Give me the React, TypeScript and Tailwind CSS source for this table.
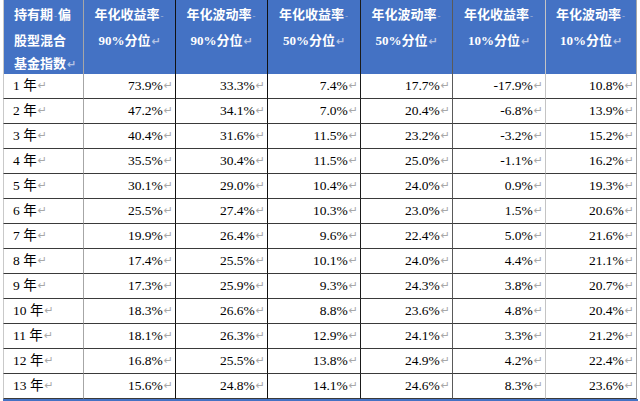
const cols = [
  { w: 'w-[80px]', line: 'border-l-[#c9c9c9]' },
  { w: 'w-[92px]', line: 'border-l-[#a6a6a6]' },
  { w: 'w-[92px]', line: 'border-l-[#111111]' },
  { w: 'w-[93px]', line: 'border-l-[#111111]' },
  { w: 'w-[92px]', line: 'border-l-[#1a1a1a]' },
  { w: 'w-[93px]', line: 'border-l-[#5a5a5a]' },
  { w: 'w-[92px]', line: 'border-l-[#c4c4c4]' },
]

const headers = [
  ['年化收益率', '90%分位'],
  ['年化波动率', '90%分位'],
  ['年化收益率', '50%分位'],
  ['年化波动率', '50%分位'],
  ['年化收益率', '10%分位'],
  ['年化波动率', '10%分位'],
]

const rows = [
  ['1 年', '73.9%', '33.3%', '7.4%', '17.7%', '-17.9%', '10.8%'],
  ['2 年', '47.2%', '34.1%', '7.0%', '20.4%', '-6.8%', '13.9%'],
  ['3 年', '40.4%', '31.6%', '11.5%', '23.2%', '-3.2%', '15.2%'],
  ['4 年', '35.5%', '30.4%', '11.5%', '25.0%', '-1.1%', '16.2%'],
  ['5 年', '30.1%', '29.0%', '10.4%', '24.0%', '0.9%', '19.3%'],
  ['6 年', '25.5%', '27.4%', '10.3%', '23.0%', '1.5%', '20.6%'],
  ['7 年', '19.9%', '26.4%', '9.6%', '22.4%', '5.0%', '21.6%'],
  ['8 年', '17.4%', '25.5%', '10.1%', '24.0%', '4.4%', '21.1%'],
  ['9 年', '17.3%', '25.9%', '9.3%', '24.3%', '3.8%', '20.7%'],
  ['10 年', '18.3%', '26.6%', '8.8%', '23.6%', '4.8%', '20.4%'],
  ['11 年', '18.1%', '26.3%', '12.9%', '24.1%', '3.3%', '21.2%'],
  ['12 年', '16.8%', '25.5%', '13.8%', '24.9%', '4.2%', '22.4%'],
  ['13 年', '15.6%', '24.8%', '14.1%', '24.6%', '8.3%', '23.6%'],
]

const font = { fontFamily: '"Liberation Serif", "Noto Sans CJK SC", serif' }

// Word paragraph mark
function Mark({ light }: { light?: boolean }) {
  return (
    <span
      className={`ml-px text-[11px] ${light ? 'text-[#b4c4e4]' : 'text-[#a8a8a8]'}`}
      style={{ fontFamily: '"DejaVu Sans", sans-serif' }}
    >
      ↵
    </span>
  )
}

function Dash() {
  return <span className="px-px text-[9px] text-[#9fb0d4]">-</span>
}

export default function App() {
  return (
    <div className="h-[401px] w-[640px] overflow-hidden bg-white pl-[3px]" style={font}>
      <div className="w-[636px]">
        {/* header */}
        <div className="flex h-[74px]">
          <div
            className={`${cols[0].w} border-l ${cols[0].line} bg-[#4472c4] pl-[10px] pt-[3px] text-[13px] font-bold leading-[23.5px] text-white`}
          >
            <div>
              持有期<Dash />偏
            </div>
            <div>股型混合</div>
            <div>
              基金指数
              <Mark light />
            </div>
          </div>
          {headers.map((h, i) => (
            <div
              key={i}
              className={`${cols[i + 1].w} border-l ${cols[i + 1].line} ${i === 5 ? 'border-r border-r-[#a6a6a6]' : ''} bg-[#4472c4] pt-[3px] text-center text-[13px] font-bold leading-[23.5px] text-white`}
            >
              <div>
                {h[0]}
                <Dash />
              </div>
              <div>
                {h[1]}
                <Mark light />
              </div>
            </div>
          ))}
        </div>

        {/* body */}
        {rows.map((r) => (
          <div key={r[0]} className="flex h-[25px]">
            {r.map((v, i) => (
              <div
                key={i}
                className={`${cols[i].w} flex items-center border-b border-b-[#3a3a3a] border-l ${cols[i].line} ${i === 6 ? 'border-r border-r-[#a6a6a6]' : ''} ${i === 0 ? 'pl-[9px]' : 'justify-end pr-[2px]'} text-[13.5px] text-black`}
              >
                {v}
                <Mark />
              </div>
            ))}
          </div>
        ))}
        <div className="h-[4px] w-[635px] bg-[#4472c4]" />
      </div>
    </div>
  )
}
